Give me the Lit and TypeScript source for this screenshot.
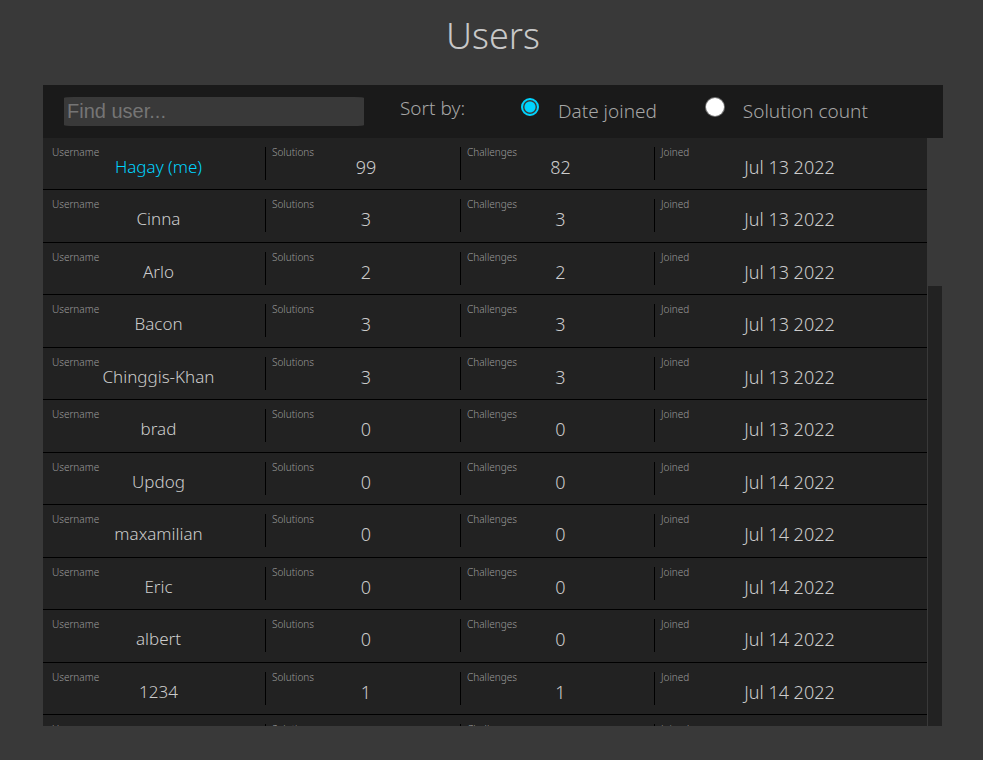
import { LitElement, html, css } from "lit";
import { customElement, state } from "lit/decorators.js";
import { classMap } from "lit/directives/class-map.js";

interface User {
  name: string;
  solutions: number;
  challenges: number;
  joined: string;
  me?: boolean;
}

const USERS: User[] = [
  { name: "Hagay (me)", solutions: 99, challenges: 82, joined: "Jul 13 2022", me: true },
  { name: "Cinna", solutions: 3, challenges: 3, joined: "Jul 13 2022" },
  { name: "Arlo", solutions: 2, challenges: 2, joined: "Jul 13 2022" },
  { name: "Bacon", solutions: 3, challenges: 3, joined: "Jul 13 2022" },
  { name: "Chinggis-Khan", solutions: 3, challenges: 3, joined: "Jul 13 2022" },
  { name: "brad", solutions: 0, challenges: 0, joined: "Jul 13 2022" },
  { name: "Updog", solutions: 0, challenges: 0, joined: "Jul 14 2022" },
  { name: "maxamilian", solutions: 0, challenges: 0, joined: "Jul 14 2022" },
  { name: "Eric", solutions: 0, challenges: 0, joined: "Jul 14 2022" },
  { name: "albert", solutions: 0, challenges: 0, joined: "Jul 14 2022" },
  { name: "1234", solutions: 1, challenges: 1, joined: "Jul 14 2022" },
  { name: "", solutions: 0, challenges: 0, joined: "Jul 14 2022" },
];

@customElement("user-table")
export class UserTable extends LitElement {
  static properties = { users: { attribute: false } };
  declare users: User[];

  static styles = css`
    :host {
      display: grid;
      grid-template-columns: 1fr 14px;
      column-gap: 1px;
      min-height: 0;
      overflow: hidden;
    }
    .viewport {
      overflow-x: hidden;
      overflow-y: auto;
      scrollbar-width: none;
      background: #222;
    }
    table,
    tbody {
      display: block;
    }
    tr {
      display: grid;
      grid-template-columns: 213fr 195fr 194fr 264fr;
      box-sizing: border-box;
      height: 52px;
      padding: 9px 9px 0;
      border-bottom: 1px solid #000;
    }
    tr:nth-child(even) {
      height: 53px;
    }
    td {
      display: flex;
      flex-direction: column;
      box-sizing: border-box;
      height: 33px;
      padding: 0;
      color: #ccc;
    }
    td + td {
      padding-left: 6px;
      border-left: 1px solid #000;
    }
    .label {
      font-size: 10px;
      line-height: 10px;
      color: #9c9c9c;
    }
    .value {
      font-size: 18px;
      line-height: 20px;
      text-align: center;
      white-space: nowrap;
    }
    .name {
      font-size: 17px;
    }
    .me {
      color: #00d4ff;
    }
    .track {
      background: #222;
    }
    .thumb {
      height: calc(25% + 1px);
      background: #393939;
    }
  `;

  private cell(label: string, value: string | number, kind: Record<string, boolean> = {}) {
    return html`<td>
      <span class="label">${label}</span>
      <span class=${classMap({ value: true, ...kind })}>${value}</span>
    </td>`;
  }

  render() {
    return html`
      <div class="viewport">
        <table>
          <tbody>
            ${this.users.map(
              (u) => html`<tr>
                ${this.cell("Username", u.name, { name: true, me: !!u.me })}
                ${this.cell("Solutions", u.solutions)}
                ${this.cell("Challenges", u.challenges)}
                ${this.cell("Joined", u.joined)}
              </tr>`
            )}
          </tbody>
        </table>
      </div>
      <div class="track"><div class="thumb"></div></div>
    `;
  }
}

@customElement("app-root")
export class AppRoot extends LitElement {
  @state() private query = "";
  @state() private sort = "date";

  static styles = css`
    :host {
      display: flex;
      flex-direction: column;
      box-sizing: border-box;
      height: 100vh;
      padding: 0 40px 34px 43px;
      background: #393939;
      color: #a6a6a6;
      font-family: "Noto Sans", "Open Sans", sans-serif;
      font-weight: 300;
    }
    h1 {
      margin: 0;
      padding: 8px 0 21px;
      font-size: 36px;
      line-height: 56px;
      font-weight: 300;
      text-align: center;
      color: #c8c8c8;
    }
    .bar {
      display: flex;
      align-items: flex-start;
      box-sizing: border-box;
      height: 53px;
      padding: 12px 21px 0;
      background: #1a1a1a;
      font-size: 19px;
      line-height: 22px;
      white-space: nowrap;
    }
    .find {
      box-sizing: border-box;
      width: 300px;
      height: 29px;
      margin: 0;
      padding: 0 3px;
      border: 0;
      border-radius: 10px / 1px;
      background: #393939;
      color: #bbb;
      font: 20px "Liberation Sans", Arial, sans-serif;
    }
    .find::placeholder {
      color: #757575;
    }
    .sort {
      display: flex;
      margin: 0 0 0 36px;
    }
    .caption {
      width: 121px;
    }
    .option {
      display: flex;
      gap: 19px;
    }
    .option + .option {
      margin-left: 49px;
    }
    .option span {
      padding-top: 3px;
    }
    input[type="radio"] {
      appearance: none;
      box-sizing: border-box;
      width: 18px;
      height: 18px;
      margin: 1px 0 0;
      border-radius: 50%;
      background: #fff;
      box-shadow: 0 0 0 1px #767676;
    }
    input[type="radio"]:checked {
      border: 2px solid #00d4ff;
      background: radial-gradient(circle, #00d4ff 5px, #393939 6px);
      box-shadow: none;
    }
    user-table {
      flex: 1;
      margin-right: 1px;
    }
  `;

  private option(id: string, text: string) {
    return html`<label class="option">
      <input type="radio" name="sort" value=${id} .checked=${this.sort === id} @change=${() => (this.sort = id)} />
      <span>${text}</span>
    </label>`;
  }

  render() {
    const q = this.query.toLowerCase();
    const users = USERS.filter((u) => u.name.toLowerCase().includes(q));
    if (this.sort === "count") users.sort((a, b) => b.solutions - a.solutions);
    return html`
      <h1>Users</h1>
      <div class="bar">
        <input
          class="find"
          type="text"
          aria-label="Find user"
          placeholder="Find user..."
          .value=${this.query}
          @input=${(e: Event) => (this.query = (e.target as HTMLInputElement).value)}
        />
        <div class="sort" role="radiogroup" aria-labelledby="caption">
          <span class="caption" id="caption">Sort by:</span>
          ${this.option("date", "Date joined")} ${this.option("count", "Solution count")}
        </div>
      </div>
      <user-table .users=${users}></user-table>
    `;
  }
}
